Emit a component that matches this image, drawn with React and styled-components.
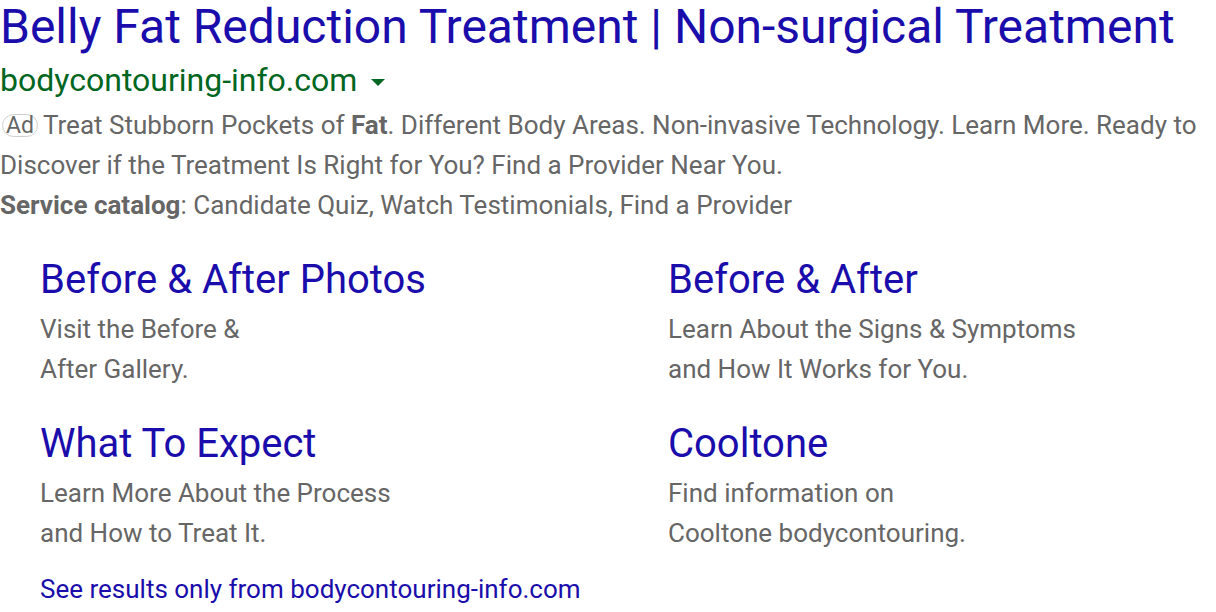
import React from 'react';
import styled, { createGlobalStyle } from 'styled-components';

const GlobalStyle = createGlobalStyle`
  html, body {
    margin: 0;
    padding: 0;
    background: #fff;
  }
  body {
    font-family: Roboto, "Liberation Sans", Arial, sans-serif;
  }
`;

const Result = styled.div`
  width: 1216px;
`;

const Title = styled.a`
  display: block;
  color: #1a0dab;
  font-size: 48px;
  line-height: 54px;
  text-decoration: none;
  white-space: nowrap;
`;

const UrlRow = styled.div`
  display: flex;
  align-items: center;
  height: 32px;
  margin-top: 10px;
`;

const Url = styled.span`
  color: #006621;
  font-size: 32px;
  line-height: 32px;
`;

const Caret = styled.span`
  width: 0;
  height: 0;
  margin-left: 14px;
  margin-top: 4px;
  border-left: 7px solid transparent;
  border-right: 7px solid transparent;
  border-top: 7px solid #006621;
`;

const Desc = styled.div`
  color: #666;
  font-size: 26px;
  line-height: 40px;
  margin-top: 9px;
`;

const Badge = styled.span`
  display: inline-block;
  border: 1.5px solid #cfcfcf;
  border-radius: 12px;
  padding: 0 3px;
  margin-left: 2px;
  height: 21px;
  line-height: 21px;
  font-size: 23px;
  margin-right: 5px;
  vertical-align: 1px;
`;

const Bold = styled.b`
  font-weight: 700;
`;

const Sitelinks = styled.div`
  display: grid;
  grid-template-columns: 628px 1fr;
  row-gap: 31px;
  padding-left: 40px;
  margin-top: 31px;
`;

const Sitelink = styled.div``;

const LinkTitle = styled.a`
  display: block;
  color: #1a0dab;
  font-size: 40px;
  line-height: 48px;
  text-decoration: none;
`;

const LinkDesc = styled.div`
  color: #666;
  font-size: 26px;
  line-height: 40px;
  margin-top: 5px;
`;

const Footer = styled.a`
  display: block;
  color: #1a0dab;
  font-size: 26px;
  line-height: 36px;
  padding-left: 40px;
  margin-top: 18px;
  text-decoration: none;
`;

const sitelinks = [
  { title: 'Before & After Photos', lines: ['Visit the Before &', 'After Gallery.'] },
  { title: 'Before & After', lines: ['Learn About the Signs & Symptoms', 'and How It Works for You.'] },
  { title: 'What To Expect', lines: ['Learn More About the Process', 'and How to Treat It.'] },
  { title: 'Cooltone', lines: ['Find information on', 'Cooltone bodycontouring.'] },
];

const App = () => {
  return (
    <>
      <GlobalStyle />
      <Result>
        <Title href="#">Belly Fat Reduction Treatment | Non-surgical Treatment</Title>
        <UrlRow>
          <Url>bodycontouring-info.com</Url>
          <Caret />
        </UrlRow>
        <Desc>
          <Badge>Ad</Badge>Treat Stubborn Pockets of <Bold>Fat</Bold>. Different Body Areas. Non-invasive Technology. Learn More. Ready to
          <br />
          Discover if the Treatment Is Right for You? Find a Provider Near You.
          <br />
          <Bold>Service catalog</Bold>: Candidate Quiz, Watch Testimonials, Find a Provider
        </Desc>
        <Sitelinks>
          {sitelinks.map((link, i) => (
            <Sitelink key={i}>
              <LinkTitle href="#">{link.title}</LinkTitle>
              <LinkDesc>
                {link.lines[0]}
                <br />
                {link.lines[1]}
              </LinkDesc>
            </Sitelink>
          ))}
        </Sitelinks>
        <Footer href="#">See results only from bodycontouring-info.com</Footer>
      </Result>
    </>
  );
};

export default App;
